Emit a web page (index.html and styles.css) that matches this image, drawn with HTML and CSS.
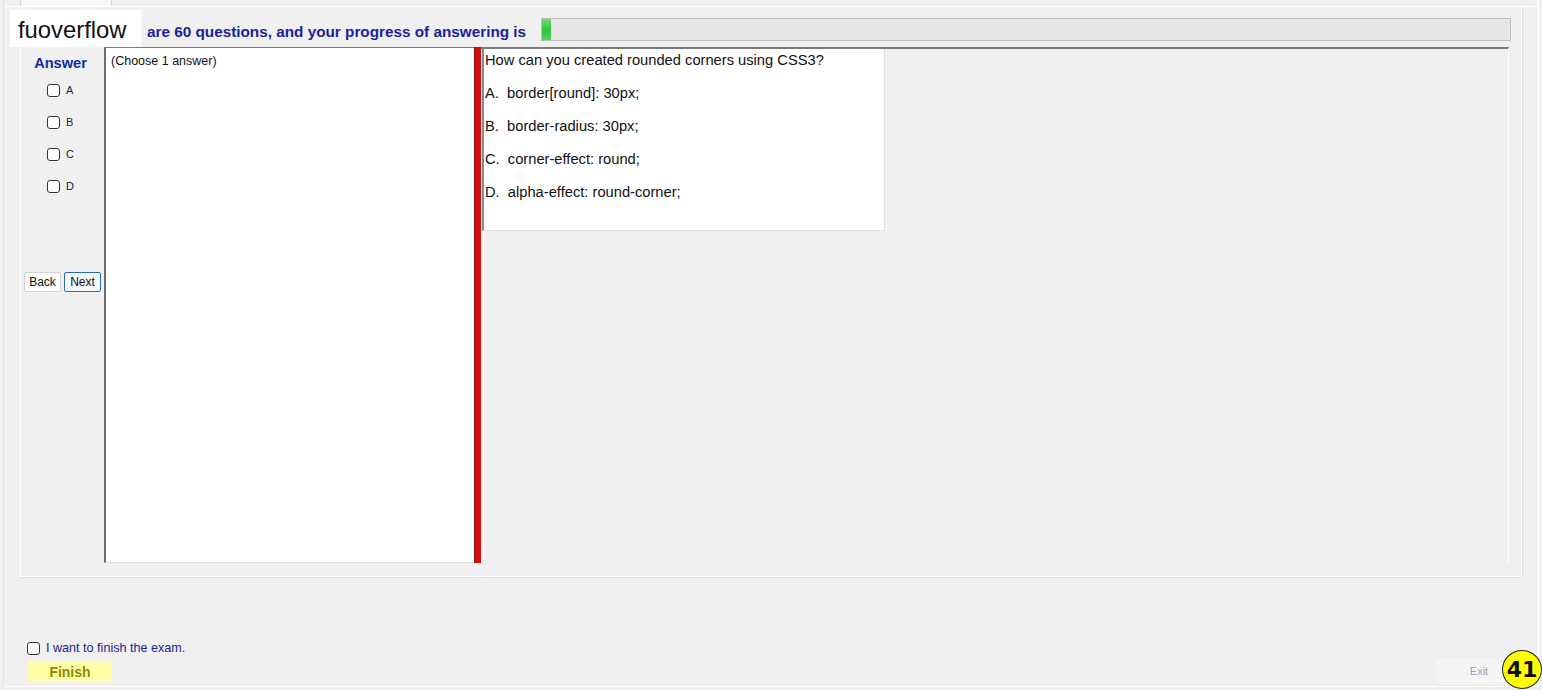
FILE: index.html
```html
<!DOCTYPE html>
<html lang="en">

<head>
    <meta charset="UTF-8">
    <title>Exam</title>
    <link rel="stylesheet" href="styles.css">
</head>

<body>
    <div class="frame">
        <div class="tabstrip">
            <div class="tab"></div>
        </div>

        <div class="group">
            <div class="header">
                <span class="progress-text">are 60 questions, and your progress of answering is</span>
                <div class="progress">
                    <div class="progress-fill"></div>
                </div>
            </div>

            <div class="main">
                <div class="answer-col">
                    <div class="answer-title">Answer</div>
                    <label class="choice"><input type="checkbox"> A</label>
                    <label class="choice"><input type="checkbox"> B</label>
                    <label class="choice"><input type="checkbox"> C</label>
                    <label class="choice"><input type="checkbox"> D</label>
                    <div class="nav-buttons">
                        <button class="btn">Back</button>
                        <button class="btn btn-next">Next</button>
                    </div>
                </div>

                <div class="answer-box">(Choose 1 answer)</div>

                <div class="splitter"></div>

                <div class="question-pane">
                    <div class="question-box">
                        <p class="question">How can you created rounded corners using CSS3?</p>
                        <p class="option">A.  border[round]: 30px;</p>
                        <p class="option">B.  border-radius: 30px;</p>
                        <p class="option">C.  corner-effect: round;</p>
                        <p class="option">D.  alpha-effect: round-corner;</p>
                    </div>
                </div>
            </div>
        </div>

        <div class="footer">
            <div class="finish-block">
                <label class="finish-check"><input type="checkbox"> I want to finish the exam.</label>
                <button class="finish-btn">Finish</button>
            </div>
            <div class="exit-block">
                <button class="exit-btn">Exit</button>
                <span class="badge">41</span>
            </div>
        </div>
    </div>

    <div class="watermark">fuoverflow</div>
</body>

</html>
```

FILE: styles.css
```css
html,
body {
    margin: 0;
    padding: 0;
}

body {
    width: 1542px;
    height: 690px;
    background: #f0f0f0;
    font-family: "Liberation Sans", Arial, sans-serif;
    position: relative;
    overflow: hidden;
}

.frame {
    margin-left: 3px;
    width: 1534px;
    height: 686px;
    border-left: 1px solid #e4e4e4;
    border-right: 1px solid #fff;
    border-bottom: 1px solid #fff;
    display: flex;
    flex-direction: column;
}

.tabstrip {
    height: 6px;
    border-bottom: 1px solid #fff;
    display: flex;
}

.tab {
    margin-left: 16px;
    width: 90px;
    height: 6px;
    background: #f8f8f8;
    border-left: 1px solid #d8d8d8;
    border-right: 1px solid #d8d8d8;
}

.group {
    margin-left: 16px;
    width: 1500px;
    height: 569px;
    border-left: 1px solid #fff;
    border-right: 1px solid #fff;
    border-bottom: 1px solid #fff;
    box-shadow: 1px 1px 0 #e2e2e2;
    display: flex;
    flex-direction: column;
}

.header {
    height: 40px;
    display: flex;
    align-items: center;
}

.progress-text {
    margin-left: 126px;
    margin-top: 9px;
    font-size: 15.3px;
    font-weight: bold;
    color: #1a1f9c;
    white-space: nowrap;
}

.progress {
    margin-left: auto;
    margin-right: 10px;
    margin-top: 4px;
    width: 968px;
    height: 21px;
    background: #e6e6e6;
    border: 1px solid #bcbcbc;
    display: flex;
}

.progress-fill {
    width: 9px;
    background: linear-gradient(#6ee06e, #2fc23f 50%, #52d45c);
}

.main {
    height: 516px;
    margin-left: 1px;
    width: 1487px;
    display: flex;
}

.answer-col {
    width: 82px;
    display: flex;
    flex-direction: column;
}

.answer-title {
    text-align: center;
    font-size: 14.6px;
    font-weight: bold;
    color: #0d2a9e;
    margin-top: 8px;
    margin-left: -5px;
    margin-bottom: 3px;
}

.choice {
    display: flex;
    align-items: center;
    gap: 6px;
    margin-left: 25px;
    height: 32px;
    font-size: 11px;
    color: #222;
}

.choice input,
.finish-check input {
    appearance: none;
    margin: 0;
    width: 13px;
    height: 13px;
    border: 1px solid #333;
    border-radius: 3px;
    background: #fff;
}

.nav-buttons {
    margin-top: 70px;
    display: flex;
    gap: 3px;
    margin-left: 2px;
}

.btn {
    width: 37px;
    height: 20px;
    padding: 0;
    font-family: "Liberation Sans", Arial, sans-serif;
    font-size: 12px;
    color: #111;
    background: #fdfdfd;
    border: 1px solid #d4d4d4;
    border-radius: 2px;
}

.btn-next {
    border-color: #2b6cb0;
    background: #f4f9fd;
}

.answer-box {
    width: 370px;
    background: #fff;
    border-left: 2px solid #6e6e6e;
    border-top: 1px solid #7a7a7a;
    border-bottom: 1px solid #e0e0e0;
    padding: 6px 5px;
    font-size: 12.5px;
    color: #111;
    box-sizing: border-box;
}

.splitter {
    width: 7px;
    background: #d40f0f;
    border-left: 1px solid #8a1010;
    box-sizing: border-box;
}

.question-pane {
    flex: 1;
    border-top: 2px solid #7a7a7a;
    border-right: 1px solid #fff;
}

.question-box {
    margin-left: 1px;
    width: 403px;
    height: 182px;
    background: #fff;
    border-left: 2px solid #8a8a8a;
    border-right: 1px solid #e2e2e2;
    border-bottom: 1px solid #e2e2e2;
    padding: 3px 0 0 1px;
    box-sizing: border-box;
}

.question-box p {
    margin: 0;
    font-size: 14.7px;
    color: #111;
    white-space: pre;
    line-height: 17px;
}

.question-box .option {
    margin-top: 16px;
}

.footer {
    flex: 1;
    display: flex;
    justify-content: space-between;
    align-items: flex-end;
}

.finish-block {
    margin-left: 23px;
    margin-bottom: 4px;
    display: flex;
    flex-direction: column;
    gap: 6px;
}

.finish-check {
    display: flex;
    align-items: center;
    gap: 6px;
    font-size: 12.6px;
    color: #1c1c8c;
}

.finish-btn {
    margin-left: 1px;
    width: 84px;
    height: 21px;
    padding: 0;
    border: none;
    background: #ffffa8;
    color: #8a8a00;
    font-family: "Liberation Sans", Arial, sans-serif;
    font-size: 14px;
    font-weight: bold;
}

.exit-block {
    display: flex;
    align-items: flex-end;
    margin-right: -4px;
    margin-bottom: -3px;
}

.exit-btn {
    width: 66px;
    height: 23px;
    margin-bottom: 7px;
    padding: 0 0 0 18px;
    border: 1px solid #f7f7f7;
    background: #f4f4f4;
    color: #a0a0a0;
    font-family: "Liberation Sans", Arial, sans-serif;
    font-size: 11px;
}

.badge {
    width: 38px;
    height: 37px;
    margin-left: -1px;
    border-radius: 50%;
    background: #ffff00;
    border: 1.5px solid #222;
    display: flex;
    align-items: center;
    justify-content: center;
    font-size: 22px;
    font-weight: bold;
    color: #111;
    font-family: "DejaVu Sans", sans-serif;
}

.watermark {
    position: absolute;
    left: 10px;
    top: 10px;
    width: 131px;
    height: 37px;
    padding-left: 8px;
    padding-top: 3px;
    box-sizing: border-box;
    background: #fff;
    font-size: 23.8px;
    color: #111;
    display: flex;
    align-items: center;
}
```
